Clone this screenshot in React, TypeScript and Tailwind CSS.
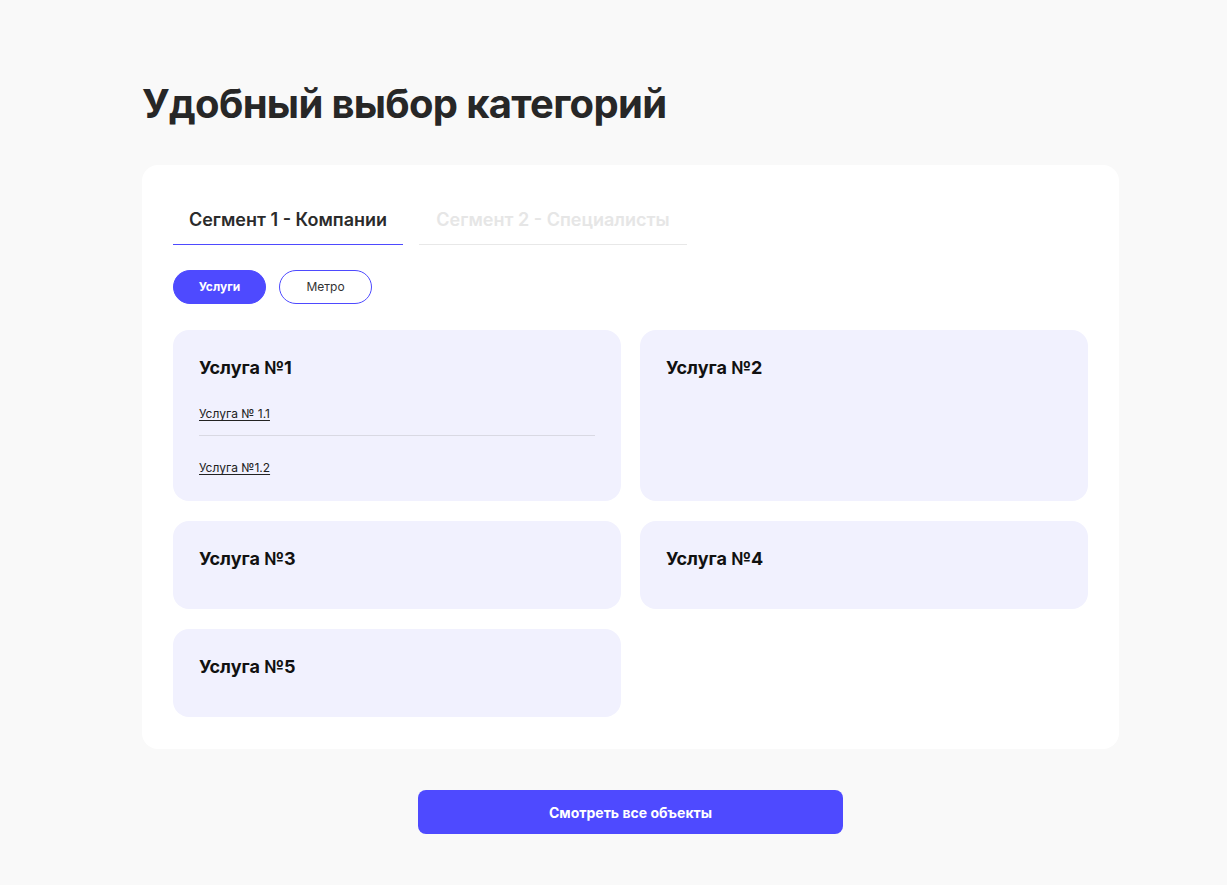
import React, { useState } from 'react';

type Service = { title: string; items: string[] };

const SERVICES: Service[] = [
    { title: 'Услуга №1', items: ['Услуга № 1.1', 'Услуга №1.2'] },
    { title: 'Услуга №2', items: [] },
    { title: 'Услуга №3', items: [] },
    { title: 'Услуга №4', items: [] },
    { title: 'Услуга №5', items: [] },
];

const TABS = [
    { label: 'Сегмент 1 - Компании', width: 'w-[230px]' },
    { label: 'Сегмент 2 - Специалисты', width: 'w-[268px]' },
];

const ServiceCard: React.FC<{ service: Service }> = ({ service }) => (
    <div className="bg-[#f1f1fe] rounded-2xl px-[26px] pt-[26px] pb-[25px]">
        <h3 className="text-[18px] leading-[24px] font-bold text-[#111111] mb-[13px]">{service.title}</h3>
        {service.items.length > 0 && (
            <ul>
                {service.items.map((item, i) => (
                    <li
                        key={item}
                        className={`text-[12px] leading-[16px] ${i === 0 ? 'pt-[13px] pb-[13px] border-b border-[#d9d9e3]' : 'pt-[24px]'}`}
                    >
                        <a href="#" className="block w-fit text-[#222222] underline underline-offset-2">{item}</a>
                    </li>
                ))}
            </ul>
        )}
    </div>
);

const App: React.FC = () => {
    const [tab, setTab] = useState(0);
    const [filter, setFilter] = useState<'services' | 'metro'>('services');

    const pillClass = (active: boolean) =>
        `h-[34px] rounded-full text-[12px] w-[93px] border ${
            active
                ? 'bg-[#4e4aff] border-[#4e4aff] text-white font-bold'
                : 'bg-white border-[#4e4aff] text-[#333333] font-normal'
        }`;

    return (
        <main className="min-h-screen bg-[#f9f9f9] pt-[78px] pb-[51px]" style={{ fontFamily: 'Inter, "Noto Sans", sans-serif' }}>
            <div className="w-[977px] ml-[142px]">
                <h1 className="text-[40px] leading-[52px] font-bold text-[#272727] tracking-[-0.7px] mb-[35px]">Удобный выбор категорий</h1>

                <section className="bg-white rounded-2xl px-[31px] pt-[31px] pb-[32px]">
                    <div className="flex gap-4">
                        {TABS.map((t, i) => (
                            <button
                                key={t.label}
                                onClick={() => setTab(i)}
                                className={`${t.width} py-3 text-[18px] leading-[24px] font-semibold text-center border-b ${
                                    tab === i ? 'border-[#4e4aff] text-[#2b2b2b]' : 'border-[#e8e8e8] text-[#e6e6e6]'
                                }`}
                            >
                                {t.label}
                            </button>
                        ))}
                    </div>

                    <div className="flex gap-[13px] mt-[25px]">
                        <button onClick={() => setFilter('services')} className={pillClass(filter === 'services')}>Услуги</button>
                        <button onClick={() => setFilter('metro')} className={pillClass(filter === 'metro')}>Метро</button>
                    </div>

                    <div className="grid grid-cols-2 gap-x-[19px] gap-y-[20px] mt-[26px]">
                        {SERVICES.map(s => (
                            <ServiceCard key={s.title} service={s} />
                        ))}
                    </div>
                </section>

                <div className="flex justify-center mt-[41px]">
                    <button className="w-[425px] h-[44px] rounded-lg bg-[#4e4aff] text-white text-[14px] font-bold">
                        Смотреть все объекты
                    </button>
                </div>
            </div>
        </main>
    );
};

export default App;
